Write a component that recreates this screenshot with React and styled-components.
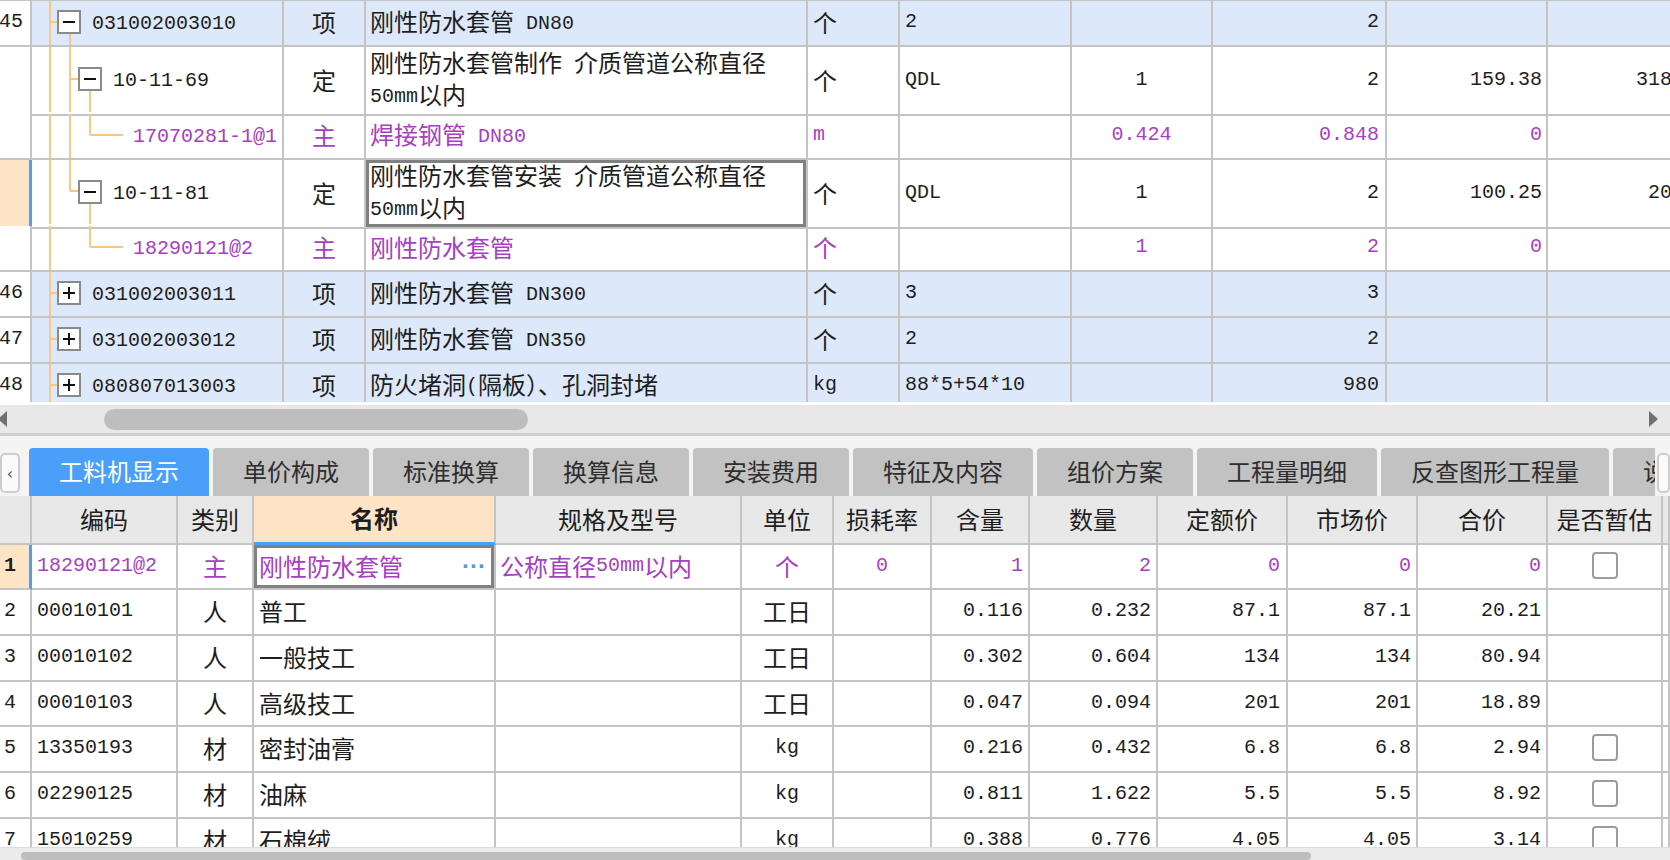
import React from 'react';
import styled, { createGlobalStyle } from 'styled-components';

const LINE = '#c4c4c4';
const PURPLE = '#a640c2';
const ITEM_BG = '#dde9fb';
const PEACH = '#fde4c4';
const BLUE = '#4a9ff9';
const INK = '#1e1e1e';
const GUIDE = '#fcc680';

const GlobalStyle = createGlobalStyle`
  html, body { margin: 0; padding: 0; background: #fff; }
  body {
    font-family: "Noto Sans CJK SC", "Noto Sans", sans-serif;
    color: ${INK};
  }
`;

const Screen = styled.div`
  width: 1670px;
  height: 860px;
  overflow: hidden;
  display: flex;
  flex-direction: column;
  background: #fff;
`;

// latin runs look half width in the original (SimSun), so they get a mono face
const Lat = styled.span`
  font-family: "Liberation Mono", "DejaVu Sans Mono", monospace;
  font-size: 20px;
  vertical-align: 2px;
`;

const T = ({ children }) => {
  if (typeof children !== 'string') return children ?? null;
  return children
    .split(/([\x00-\xff]+)/)
    .filter(Boolean)
    .map((s, i) => (/^[\x00-\xff]+$/.test(s) ? <Lat key={i}>{s}</Lat> : <span key={i}>{s}</span>));
};

/* ---------- upper grid ---------- */

const TopGrid = styled.div`
  flex: none;
  height: 402px;
  box-sizing: border-box;
  border-top: 1px solid ${LINE};
  overflow: hidden;
`;

const TopRow = styled.div`
  display: grid;
  grid-template-columns: 32px 252px 82px 442px 92px 172px 141px 174px 161px 166px;
  height: ${p => p.$h}px;
  background: ${p => (p.$item ? ITEM_BG : '#fff')};
  color: ${p => (p.$main ? PURPLE : INK)};
`;

const Cell = styled.div`
  box-sizing: border-box;
  position: relative;
  display: flex;
  align-items: center;
  justify-content: ${p => (p.$align === 'right' ? 'flex-end' : p.$align === 'center' ? 'center' : 'flex-start')};
  padding: 0 ${p => p.$pr ?? 0}px 3px ${p => p.$pl ?? 0}px;
  border-right: 2px solid ${LINE};
  border-bottom: 2px solid ${LINE};
  font-size: 24px;
  line-height: 29px;
  white-space: nowrap;
  overflow: hidden;
  min-width: 0;
`;

const NoCell = styled(Cell)`
  background: ${p => (p.$selected ? PEACH : '#fff')};
  border-right: ${p => (p.$selected ? `3px solid ${BLUE}` : `2px solid ${LINE}`)};
  font-weight: ${p => (p.$bold ? 700 : 400)};
  color: ${INK};
`;

const FocusCell = styled(Cell)`
  overflow: visible;
  box-shadow: ${p => (p.$focus ? 'inset 0 0 0 3px #808080' : 'none')};
`;

const NameLines = styled.div`
  display: flex;
  flex-direction: column;
`;

const TreeWrap = styled.div`
  position: relative;
  z-index: 1;
  display: flex;
  align-items: center;
  gap: 11px;
  padding-left: ${p => p.$indent}px;
`;

const GuideSvg = styled.svg`
  position: absolute;
  left: 0;
  top: 0;
`;

const Toggle = styled.span`
  box-sizing: border-box;
  width: 24px;
  height: 24px;
  flex: none;
  border: 2px solid #8a8a8a;
  background: #fff;
  position: relative;
  &::before, &::after {
    content: '';
    position: absolute;
    background: #111;
  }
  &::before {
    left: 4px; right: 4px; top: 9px; height: 2px;
  }
  &::after {
    display: ${p => (p.$plus ? 'block' : 'none')};
    top: 4px; bottom: 4px; left: 9px; width: 2px;
  }
`;

const Guides = ({ w, h, list }) => {
  const mid = Math.round(h / 2) - 1;
  const seg = {
    v0: [18, 0, 18, h],
    v1: [38, 0, 38, h],
    v1top: [38, 0, 38, mid],
    v2top: [58, 0, 58, mid],
    stub0: [18, mid, 25, mid],
    stub1: [38, mid, 46, mid],
    stub2: [58, mid, 91, mid],
    kid0: [38, mid + 12, 38, h],
    kid1: [58, mid + 12, 58, h],
  };
  return (
    <GuideSvg width={w} height={h}>
      {list.map(k => {
        const [x1, y1, x2, y2] = seg[k];
        return <line key={k} x1={x1} y1={y1} x2={x2} y2={y2} stroke={GUIDE} strokeWidth="2" />;
      })}
    </GuideSvg>
  );
};

const topRows = [
  { no: '45', h: 46, item: true, level: 0, box: 'minus', guides: ['v0', 'stub0', 'kid0'], code: '031002003010', type: '项', name: ['刚性防水套管 DN80'], unit: '个', expr: '2', v: ['', '2', '', ''] },
  { h: 67, level: 1, box: 'minus', guides: ['v0', 'v1', 'stub1', 'kid1'], code: '10-11-69', type: '定', name: ['刚性防水套管制作 介质管道公称直径', '50mm以内'], unit: '个', expr: 'QDL', v: ['1', '2', '159.38', '318.76'] },
  { h: 46, main: true, level: 2, guides: ['v0', 'v1', 'v2top', 'stub2'], code: '17070281-1@1', type: '主', name: ['焊接钢管 DN80'], unit: 'm', expr: '', v: ['0.424', '0.848', '0', ''] },
  { h: 66, selected: true, focus: true, level: 1, box: 'minus', guides: ['v0', 'v1top', 'stub1', 'kid1'], code: '10-11-81', type: '定', name: ['刚性防水套管安装 介质管道公称直径', '50mm以内'], unit: '个', expr: 'QDL', v: ['1', '2', '100.25', '200.5'] },
  { h: 46, main: true, level: 2, guides: ['v0', 'v2top', 'stub2'], code: '18290121@2', type: '主', name: ['刚性防水套管'], unit: '个', expr: '', v: ['1', '2', '0', ''] },
  { no: '46', h: 46, item: true, level: 0, box: 'plus', guides: ['v0', 'stub0'], code: '031002003011', type: '项', name: ['刚性防水套管 DN300'], unit: '个', expr: '3', v: ['', '3', '', ''] },
  { no: '47', h: 46, item: true, level: 0, box: 'plus', guides: ['v0', 'stub0'], code: '031002003012', type: '项', name: ['刚性防水套管 DN350'], unit: '个', expr: '2', v: ['', '2', '', ''] },
  { no: '48', h: 46, item: true, level: 0, box: 'plus', guides: ['v0', 'stub0'], code: '080807013003', type: '项', name: ['防火堵洞(隔板）、孔洞封堵'], unit: 'kg', expr: '88*5+54*10', v: ['', '980', '', ''] },
];

const indentFor = [25, 46, 101];

const TopTable = () => (
  <TopGrid>
    {topRows.map((r, i) => (
      <TopRow key={i} $h={r.h} $item={r.item} $main={r.main}>
        <NoCell $align="right" $pr={7} $selected={r.selected}><T>{r.no || ''}</T></NoCell>
        <Cell>
          <Guides w={250} h={r.h - 2} list={r.guides} />
          <TreeWrap $indent={indentFor[r.level]}>
            {r.box && <Toggle $plus={r.box === 'plus'} />}
            <span><T>{r.code}</T></span>
          </TreeWrap>
        </Cell>
        <Cell $align="center">{r.type}</Cell>
        <FocusCell $pl={4} $focus={r.focus}>
          <NameLines>
            {r.name.map(line => <div key={line}><T>{line}</T></div>)}
          </NameLines>
        </FocusCell>
        <Cell $pl={5}><T>{r.unit}</T></Cell>
        <Cell $pl={5}><T>{r.expr}</T></Cell>
        <Cell $align="center"><T>{r.v[0]}</T></Cell>
        <Cell $align="right" $pr={6}><T>{r.v[1]}</T></Cell>
        <Cell $align="right" $pr={4}><T>{r.v[2]}</T></Cell>
        <Cell $align="right" $pr={4}><T>{r.v[3]}</T></Cell>
      </TopRow>
    ))}
  </TopGrid>
);

/* ---------- scrollbars ---------- */

const HScroll = styled.div`
  flex: none;
  margin-top: 3px;
  height: 28px;
  background: #e8e8e8;
  border-bottom: 3px solid #cfcfcf;
  display: flex;
  align-items: center;
`;

const ArrowL = styled.span`
  width: 0;
  height: 0;
  margin-left: -2px;
  border-top: 8px solid transparent;
  border-bottom: 8px solid transparent;
  border-right: 9px solid #707070;
`;

const ArrowR = styled.span`
  width: 0;
  height: 0;
  margin: 0 12px 0 auto;
  border-top: 8px solid transparent;
  border-bottom: 8px solid transparent;
  border-left: 9px solid #707070;
`;

const Thumb = styled.span`
  margin-left: ${p => p.$left}px;
  width: ${p => p.$w}px;
  height: ${p => p.$h}px;
  border-radius: 11px;
  background: #bebebe;
`;

const BottomScroll = styled.div`
  flex: none;
  height: 12px;
  background: #ececec;
  border-top: 1px solid #dcdcdc;
  display: flex;
  align-items: flex-end;
`;

/* ---------- tabs ---------- */

const TabStrip = styled.div`
  flex: none;
  height: 60px;
  background: #f4f4f4;
  display: flex;
  align-items: flex-end;
`;

const ScrollBtn = styled.span`
  box-sizing: border-box;
  flex: none;
  width: ${p => p.$w}px;
  height: 40px;
  margin: 0 ${p => p.$mr || 0}px 3px ${p => p.$ml || 0}px;
  border: 2px solid #cdcdcd;
  border-radius: 5px;
  background: #fafafa;
  color: #555;
  font-family: "DejaVu Sans", sans-serif;
  font-size: 16px;
  display: flex;
  align-items: center;
  justify-content: center;
`;

const Tabs = styled.div`
  flex: 1;
  min-width: 0;
  display: flex;
  gap: 4px;
  overflow: hidden;
`;

const Tab = styled.div`
  flex: none;
  height: 48px;
  padding: 0 30px;
  border-radius: 4px 4px 0 0;
  background: ${p => (p.$active ? BLUE : '#c2c2c2')};
  color: ${p => (p.$active ? '#fff' : '#2e2e2e')};
  font-size: 24px;
  line-height: 45px;
  white-space: nowrap;
`;

const tabs = ['工料机显示', '单价构成', '标准换算', '换算信息', '安装费用', '特征及内容', '组价方案', '工程量明细', '反查图形工程量', '说明信息'];

/* ---------- lower grid ---------- */

const BottomGrid = styled.div`
  flex: 1;
  min-height: 0;
  overflow: hidden;
`;

const BotRow = styled.div`
  display: grid;
  grid-template-columns: 32px 146px 76px 242px 246px 92px 98px 98px 128px 130px 130px 130px 115px 1fr;
  height: ${p => p.$h}px;
  background: ${p => (p.$head ? '#e8e8e8' : '#fff')};
  color: ${p => (p.$main ? PURPLE : INK)};
`;

const HeadCell = styled(Cell)`
  justify-content: center;
  background: ${p => (p.$active ? PEACH : 'transparent')};
  font-weight: ${p => (p.$active ? 700 : 400)};
  border-bottom: ${p => (p.$active ? `3px solid ${BLUE}` : `2px solid ${LINE}`)};
  color: ${INK};
`;

const EditCell = styled(FocusCell)`
  justify-content: space-between;
`;

const Dots = styled.span`
  color: #4f9be2;
  font-family: "Liberation Sans", sans-serif;
  font-size: 24px;
  font-weight: 700;
  letter-spacing: 0;
  margin-right: 8px;
`;

const Check = styled.span`
  box-sizing: border-box;
  width: 26px;
  height: 27px;
  border: 2px solid #9c9c9c;
  border-radius: 4px;
  background: #fff;
`;

const heads = ['', '编码', '类别', '名称', '规格及型号', '单位', '损耗率', '含量', '数量', '定额价', '市场价', '合价', '是否暂估', ''];

const botRows = [
  { no: '1', h: 45, main: true, selected: true, code: '18290121@2', type: '主', name: '刚性防水套管', spec: '公称直径50mm以内', unit: '个', loss: '0', v: ['1', '2', '0', '0', '0'], check: true },
  { no: '2', h: 46, code: '00010101', type: '人', name: '普工', unit: '工日', v: ['0.116', '0.232', '87.1', '87.1', '20.21'] },
  { no: '3', h: 46, code: '00010102', type: '人', name: '一般技工', unit: '工日', v: ['0.302', '0.604', '134', '134', '80.94'] },
  { no: '4', h: 45, code: '00010103', type: '人', name: '高级技工', unit: '工日', v: ['0.047', '0.094', '201', '201', '18.89'] },
  { no: '5', h: 46, code: '13350193', type: '材', name: '密封油膏', unit: 'kg', v: ['0.216', '0.432', '6.8', '6.8', '2.94'], check: true },
  { no: '6', h: 46, code: '02290125', type: '材', name: '油麻', unit: 'kg', v: ['0.811', '1.622', '5.5', '5.5', '8.92'], check: true },
  { no: '7', h: 46, code: '15010259', type: '材', name: '石棉绒', unit: 'kg', v: ['0.388', '0.776', '4.05', '4.05', '3.14'], check: true },
];

const valuePad = [5, 5, 6, 5, 5];

const BottomTable = () => (
  <BottomGrid>
    <BotRow $h={49} $head>
      {heads.map((h, i) => (
        <HeadCell key={i} $active={h === '名称'}>{h}</HeadCell>
      ))}
    </BotRow>
    {botRows.map(r => (
      <BotRow key={r.no} $h={r.h} $main={r.main}>
        <NoCell $pl={4} $selected={r.selected} $bold={r.selected}><T>{r.no}</T></NoCell>
        <Cell $pl={5}><T>{r.code}</T></Cell>
        <Cell $align="center">{r.type}</Cell>
        {r.selected ? (
          <EditCell $pl={5} $focus>
            <span>{r.name}</span>
            <Dots>···</Dots>
          </EditCell>
        ) : (
          <Cell $pl={5}>{r.name}</Cell>
        )}
        <Cell $pl={4}><T>{r.spec || ''}</T></Cell>
        <Cell $align="center"><T>{r.unit}</T></Cell>
        <Cell $align="center"><T>{r.loss || ''}</T></Cell>
        {r.v.map((val, i) => (
          <Cell key={i} $align="right" $pr={valuePad[i]}><T>{val}</T></Cell>
        ))}
        <Cell $align="center">{r.check && <Check />}</Cell>
        <Cell />
      </BotRow>
    ))}
  </BottomGrid>
);

export default function App() {
  return (
    <>
      <GlobalStyle />
      <Screen>
        <TopTable />
        <HScroll>
          <ArrowL />
          <Thumb $left={97} $w={424} $h={21} />
          <ArrowR />
        </HScroll>
        <TabStrip>
          <ScrollBtn $w={20} $mr={9}>‹</ScrollBtn>
          <Tabs>
            {tabs.map((t, i) => (
              <Tab key={t} $active={i === 0}>{t}</Tab>
            ))}
          </Tabs>
          <ScrollBtn $w={13} $ml={2} />
        </TabStrip>
        <BottomTable />
        <BottomScroll>
          <Thumb $left={21} $w={1290} $h={8} />
        </BottomScroll>
      </Screen>
    </>
  );
}
